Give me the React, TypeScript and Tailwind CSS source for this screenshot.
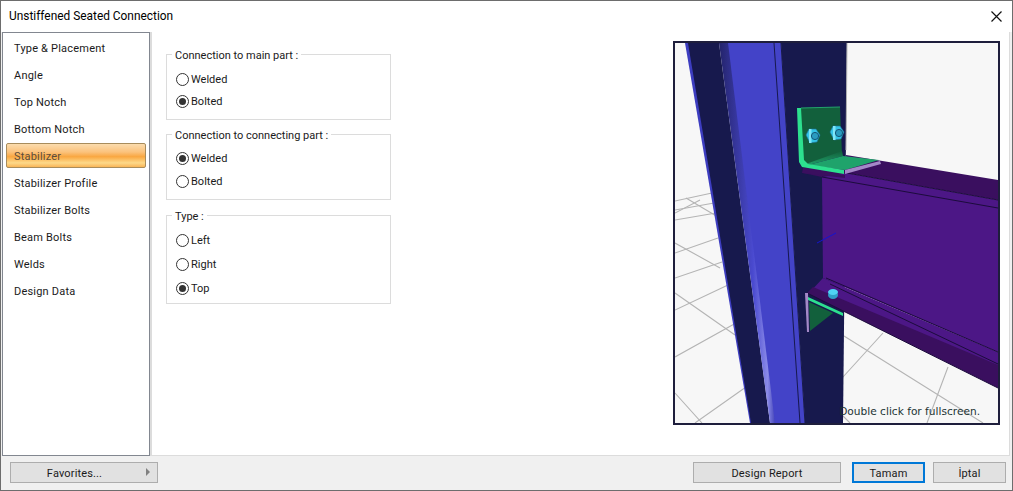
import { ReactNode } from 'react';

const tabs = [
  'Type & Placement',
  'Angle',
  'Top Notch',
  'Bottom Notch',
  'Stabilizer',
  'Stabilizer Profile',
  'Stabilizer Bolts',
  'Beam Bolts',
  'Welds',
  'Design Data',
];

function Radio({ label, checked, className }: { label: string; checked?: boolean; className: string }) {
  return (
    <div className={`flex items-center ${className}`}>
      <span className="flex h-[13px] w-[13px] shrink-0 items-center justify-center rounded-full border border-[#333] bg-white">
        {checked && <span className="h-[7px] w-[7px] rounded-full bg-[#333]" />}
      </span>
      <span className="ml-[2px] pt-[2px]">{label}</span>
    </div>
  );
}

function Group({ title, className, children }: { title: string; className: string; children: ReactNode }) {
  return (
    <fieldset className={`w-[225px] border border-[#dcdcdc] pl-[9px] ${className}`}>
      <legend className="ml-[-4px] px-[3px] pt-[4px] leading-[10px]">{title}</legend>
      {children}
    </fieldset>
  );
}

function FootButton({ className, children }: { className: string; children: ReactNode }) {
  return (
    <div className={`flex h-[21px] items-center justify-center bg-[#e1e1e1] pt-[3px] tracking-[0.15px] ${className}`}>
      {children}
    </div>
  );
}

function Nut({ x, y }: { x: number; y: number }) {
  return (
    <g transform={`translate(${x} ${y})`}>
      <polygon points="-7,-1 -4,-7 3,-7 7,-1 4,6 -3,7" fill="#34c4e6" stroke="#1f6f96" strokeWidth="0.6" />
      <rect x="-4" y="-7" width="2.5" height="14" fill="#7fe6f8" />
      <circle cx="2" cy="0" r="3.6" fill="#2a9cc0" stroke="#155678" strokeWidth="1" />
    </g>
  );
}

function Scene() {
  return (
    <svg viewBox="675 43 323 380" className="h-full w-full">
      <defs>
        <linearGradient id="fillet" x1="0" x2="1" y1="0" y2="0">
          <stop offset="0" stopColor="#23236a" />
          <stop offset="0.6" stopColor="#4a4ad0" />
          <stop offset="0.85" stopColor="#8a8ae8" />
          <stop offset="1" stopColor="#3c3cb4" />
        </linearGradient>
        <linearGradient id="angleBend" x1="0" x2="0" y1="0" y2="1">
          <stop offset="0" stopColor="#12603c" />
          <stop offset="1" stopColor="#1f9e68" />
        </linearGradient>
      </defs>
      <rect x="675" y="43" width="323" height="380" fill="#f7f7f7" />

      {/* floor grid */}
      <g stroke="#b4b4b4" strokeWidth="1.1" fill="none">
        <path d="M675 201L712 193M675 210L714 203M675 220L716 213M675 253L718 238M675 278L722 262M675 310L728 285M675 357L736 323M695 423L746 387" />
        <path d="M686 198L718 217M675 213L700 200M675 243L720 268M675 293L735 335M675 393L702 423" />
        <path d="M844 336L983 423M843 377L883 333M948 367L927 423M850 423L843 416" />
      </g>

      {/* column */}
      <polygon points="685,43 692,43 752,423 750,423" fill="#3d3dc0" />
      <polygon points="688,43 719,43 770,423 751,423" fill="#17194d" />
      <polygon points="719,43 729,43 776,423 770,423" fill="url(#fillet)" />
      <polygon points="728,43 781,43 805,423 775,423" fill="#4343c8" />
      <path d="M774 43L800 423M781 43L805 423" stroke="#17194d" strokeWidth="1" />
      <polygon points="781,43 847,43 843,423 805,423" fill="#17194d" />
      <path d="M847 43L846 150" stroke="#b0b0b0" strokeWidth="1" />

      {/* beam */}
      <polygon points="846,155 998,180 998,200 847,173" fill="#3a0f5f" />
      <polygon points="803,168 880,163 850,174 822,177 803,173" fill="#3a0f5f" />
      <polygon points="822,177 847,173 998,200 998,352 823,278" fill="#4c1786" />
      <path d="M847 173L998 200M822 177L998 208" stroke="#1c0c3c" strokeWidth="1" fill="none" />
      <polygon points="823,278 998,352 998,368 810,292" fill="#4c1786" />
      <polygon points="813,287 998,365 998,388 807,293" fill="#3a0f5f" />
      <path d="M826 278L998 352M807 293L998 388M830 284L998 364" stroke="#1c0c3c" strokeWidth="1" fill="none" />

      {/* seat angle */}
      <polygon points="798,108 840,107 842,155 803,165" fill="#12603c" />
      <polygon points="803,165 842,151 843,156 808,165" fill="url(#angleBend)" />
      <polygon points="808,165 843,156 879,160 845,170" fill="#1fa36b" />
      <polygon points="797,108 801,108 804,160 808,164 844,170 844,174 802,167 799,162" fill="#2de08f" />
      <polygon points="845,170 880,161 881,164 845,174" fill="#a488c8" />
      <path d="M801 108L840 107" stroke="#23a36c" strokeWidth="1" />
      <polygon points="803,168 802,173 845,178 845,175" fill="#3a0f5f" />

      <Nut x={813} y={136} />
      <Nut x={837} y={133} />

      {/* lower angle */}
      <polygon points="809,302 833,313 810,331" fill="#12603c" />
      <polygon points="808,297 843,313 843,316 808,300" fill="#2de08f" />
      <polygon points="805,293 808,293 809,332 807,332" fill="#a488c8" />
      <ellipse cx="833" cy="295" rx="5" ry="4" fill="#2fa0c8" />
      <ellipse cx="833" cy="292" rx="5" ry="3" fill="#4fd4f4" />

      <path d="M817 243L836 233" stroke="#1414d0" strokeWidth="1" />
    </svg>
  );
}

export default function App() {
  return (
    <div className="flex h-[491px] w-[1013px] flex-col overflow-hidden border border-[#6d6d6d] bg-[#f0f0f0] font-['Roboto',sans-serif] text-[11px] text-[#1a1a1a]">
      {/* title bar */}
      <div className="flex h-[31px] shrink-0 items-center justify-between bg-white pl-[8px] pr-[10px]">
        <span className="text-[11.9px] text-black">Unstiffened Seated Connection</span>
        <svg width="11" height="11" viewBox="0 0 11 11" stroke="#111" strokeWidth="1.2">
          <path d="M0.5 0.5L10.5 10.5M10.5 0.5L0.5 10.5" />
        </svg>
      </div>

      <div className="flex min-h-0 flex-1 pl-[1px] pr-[2px]">
        {/* tab list */}
        <div className="flex w-[148px] shrink-0 flex-col gap-[2px] border border-[#828790] bg-white px-[3px] pt-[2px] tracking-[0.2px]">
          {tabs.map((tab) =>
            tab === 'Stabilizer' ? (
              <div
                key={tab}
                className="flex h-[25px] items-center rounded-[2px] border border-[#a88c5c] bg-[linear-gradient(#fbdcae_0%,#fbc27c_35%,#f9a741_55%,#fdd98a_82%,#f9b557_100%)] pl-[7px] pt-[4px] text-[#5c4d3c]"
              >
                {tab}
              </div>
            ) : (
              <div key={tab} className="flex h-[25px] items-center pl-[8px] pt-[4px]">
                {tab}
              </div>
            ),
          )}
        </div>

        {/* main panel */}
        <div className="flex min-w-0 flex-1 border-b border-l-2 border-r border-[#dcdcdc] bg-white">
          <div className="w-[521px] shrink-0 pl-[14px] pt-[15px]">
            <Group title="Connection to main part :" className="h-[73px]">
              <Radio label="Welded" className="mt-[11px] h-[14px]" />
              <Radio label="Bolted" checked className="mt-[8px] h-[14px]" />
            </Group>
            <Group title="Connection to connecting part :" className="mt-[7px] h-[73px]">
              <Radio label="Welded" checked className="mt-[10px] h-[14px]" />
              <Radio label="Bolted" className="mt-[9px] h-[14px]" />
            </Group>
            <Group title="Type :" className="mt-[8px] h-[96px]">
              <Radio label="Left" className="mt-[11px] h-[14px]" />
              <Radio label="Right" className="mt-[10px] h-[14px]" />
              <Radio label="Top" checked className="mt-[10px] h-[14px]" />
            </Group>
          </div>
          <div className="pt-[9px]">
            <div className="relative h-[384px] w-[327px] border-2 border-[#1e1e3c]">
              <Scene />
              <span className="absolute bottom-[3px] right-[18px] font-['DejaVu_Sans',sans-serif] text-[10.6px] text-[#1c3434]">
                Double click for fullscreen.
              </span>
            </div>
          </div>
        </div>
      </div>

      {/* footer */}
      <div className="flex h-[34px] shrink-0 items-center pb-[1px] pl-[9px] pr-[6px]">
        <FootButton className="relative w-[148px] border border-[#adadad] pr-[19px]">
          Favorites...
          <span className="absolute right-[7px] top-[5px] h-0 w-0 border-y-[4px] border-l-[4px] border-y-transparent border-l-[#808080]" />
        </FootButton>
        <FootButton className="ml-auto w-[148px] border border-[#adadad]">Design Report</FootButton>
        <FootButton className="ml-[11px] w-[73px] border-2 border-[#0078d7]">Tamam</FootButton>
        <FootButton className="ml-[8px] w-[73px] border border-[#adadad]">İptal</FootButton>
      </div>
    </div>
  );
}
